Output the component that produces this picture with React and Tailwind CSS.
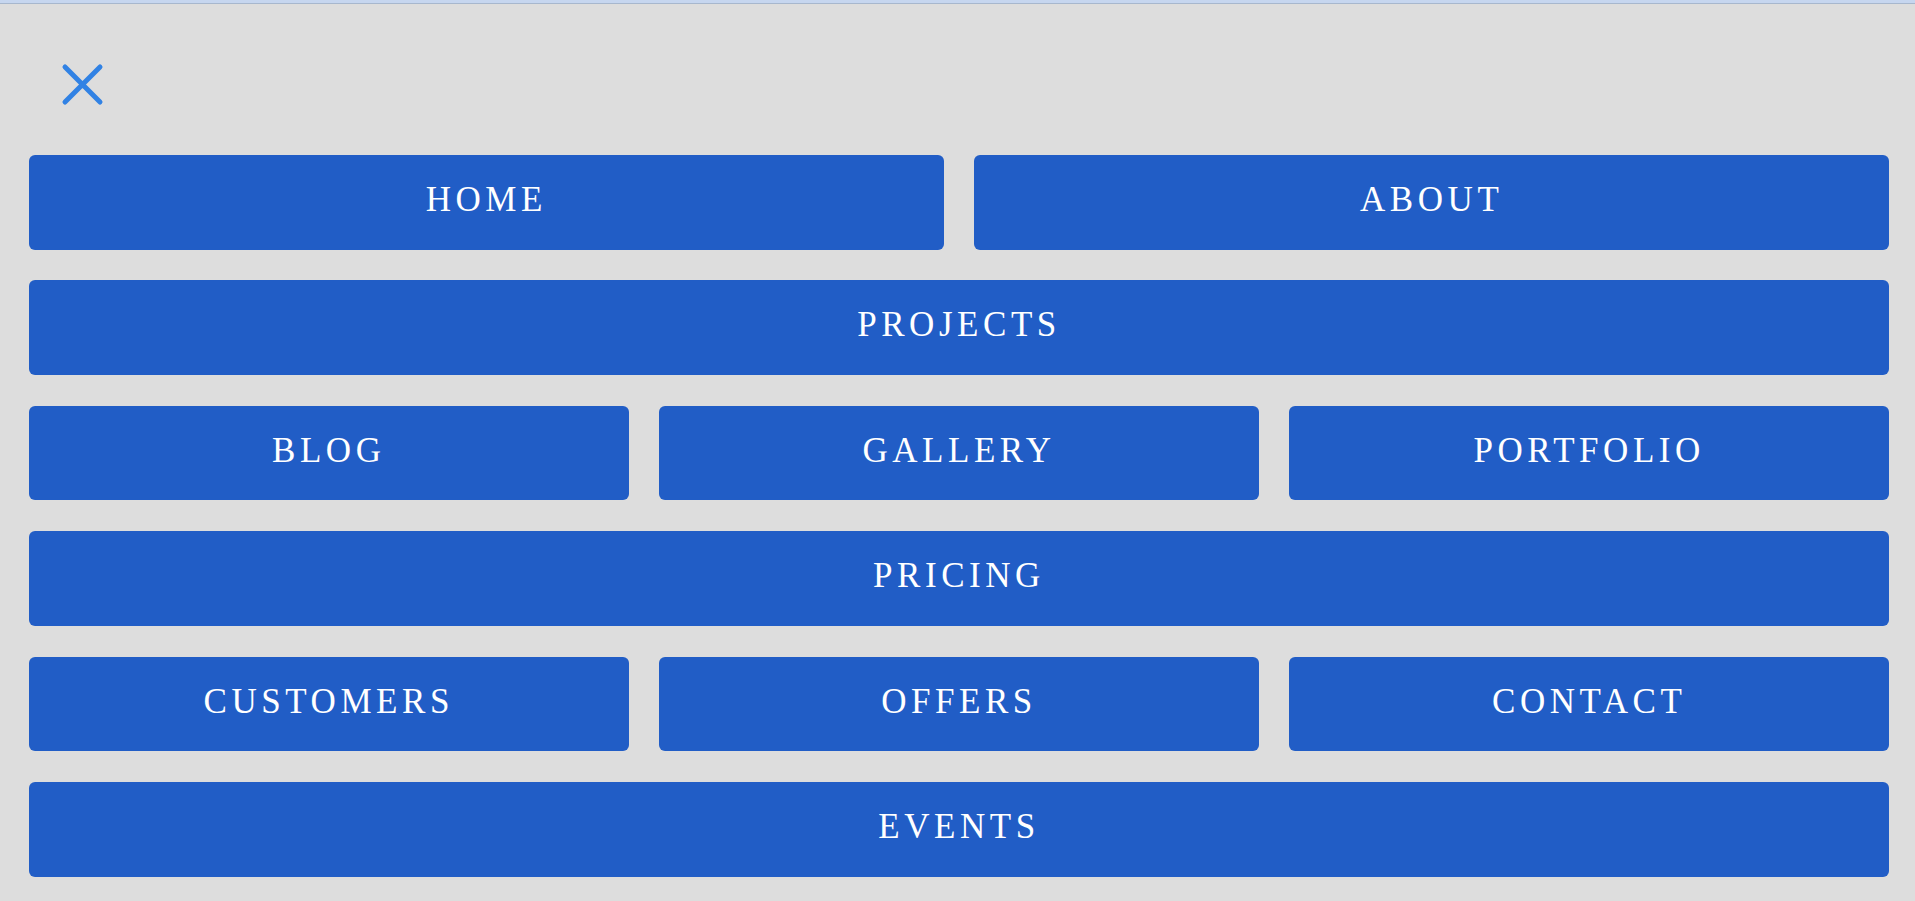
export default function App() {
    const rows = [
        ["HOME", 3],
        ["ABOUT", 3],
        ["PROJECTS", 6],
        ["BLOG", 2],
        ["GALLERY", 2],
        ["PORTFOLIO", 2],
        ["PRICING", 6],
        ["CUSTOMERS", 2],
        ["OFFERS", 2],
        ["CONTACT", 2],
        ["EVENTS", 6],
    ];

    const span = {
        2: "col-span-2",
        3: "col-span-3",
        6: "col-span-6",
    };

    return (
        <div className="min-h-screen bg-[#dddddd]">
            <div className="h-[3px] bg-[#c6d6ef]"></div>
            <div className="h-px bg-[#a7b7cd]"></div>

            <div className="pl-[29px] pr-[26px]">
                {/* close button */}
                <div className="pt-[58px] pl-[31px] h-[151px]">
                    <button className="block w-[45px] h-[45px]">
                        <svg width="45" height="45" viewBox="0 0 45 45">
                            <path
                                d="M5 5 L40 40 M40 5 L5 40"
                                stroke="#3182e4"
                                strokeWidth="5"
                                strokeLinecap="round"
                                fill="none"
                            />
                        </svg>
                    </button>
                </div>

                {/* menu */}
                <nav className="grid grid-cols-6 auto-rows-[94.7px] gap-[30.7px]">
                    {rows.map(([label, cols]) => (
                        <a
                            key={label}
                            href="#"
                            className={`${span[cols]} flex items-center justify-center rounded-[6px] bg-[#215dc6] pb-[4px] text-white text-[35px] tracking-[0.13em] font-['Liberation_Serif',serif]`}
                        >
                            {label}
                        </a>
                    ))}
                </nav>
            </div>
        </div>
    );
}
